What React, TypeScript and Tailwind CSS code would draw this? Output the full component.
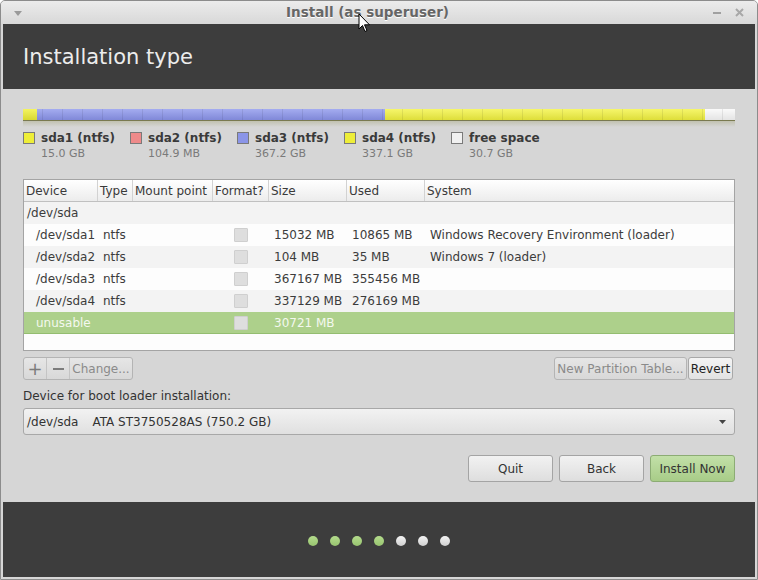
import React from "react";

const font = { fontFamily: '"DejaVu Sans", "Liberation Sans", sans-serif' };

const legend = [
  { name: "sda1 (ntfs)", size: "15.0 GB", color: "bg-[#eeee38]" },
  { name: "sda2 (ntfs)", size: "104.9 MB", color: "bg-[#ee8a8a]" },
  { name: "sda3 (ntfs)", size: "367.2 GB", color: "bg-[#8b95e8]" },
  { name: "sda4 (ntfs)", size: "337.1 GB", color: "bg-[#eeee38]" },
  { name: "free space", size: "30.7 GB", color: "bg-[#f0f0f0]" },
];

const rows = [
  { dev: "/dev/sda1", type: "ntfs", size: "15032 MB", used: "10865 MB", sys: "Windows Recovery Environment (loader)" },
  { dev: "/dev/sda2", type: "ntfs", size: "104 MB", used: "35 MB", sys: "Windows 7 (loader)" },
  { dev: "/dev/sda3", type: "ntfs", size: "367167 MB", used: "355456 MB", sys: "" },
  { dev: "/dev/sda4", type: "ntfs", size: "337129 MB", used: "276169 MB", sys: "" },
];

const cols = "grid grid-cols-[74px_35px_80px_56px_78px_78px_1fr]";

function Check() {
  return <div className="w-[14px] h-[14px] mx-auto bg-[#dedede] border border-[#cfcfcf] rounded-[1px]" />;
}

export default function App() {
  return (
    <div style={font} className="relative w-[758px] h-[580px] bg-[#d6d6d6] border border-[#8c8c8c] rounded-t-[5px] overflow-hidden flex flex-col text-[#3c3c3c]">
      {/* title bar */}
      <div className="h-[23px] shrink-0 flex items-center bg-gradient-to-b from-[#ececec] to-[#d8d8d8] px-3">
        <svg width="8" height="5" viewBox="0 0 8 5" className="ml-[1px] mt-[2px]">
          <path d="M0 0 L8 0 L4 5 Z" fill="#9a9a9a" />
        </svg>
        <div className="flex-1 text-center text-[13.5px] font-bold text-[#666] [text-shadow:0_1px_0_#fff]">
          Install (as superuser)
        </div>
        <div className="w-[8px] h-[2px] bg-[#a0a0a0] mr-[14px] mt-[1px]" />
        <svg width="9" height="9" viewBox="0 0 9 9" className="mr-[1px]">
          <path d="M1 1 L8 8 M8 1 L1 8" stroke="#a8a8a8" strokeWidth="2" />
        </svg>
      </div>

      <div className="flex-1 flex flex-col px-[2px]">
        {/* header */}
        <div className="h-[65px] shrink-0 bg-[#3d3d3d] flex items-center pl-[20px] pt-[2px]">
          <span className="text-[21px] text-[#ececec]">Installation type</span>
        </div>

        <div className="px-[20px] flex flex-col">
          {/* partition bar */}
          <div className="mt-[20px] h-[12px] flex border-b border-[#7a7a50] relative">
            <div className="w-[14px] bg-gradient-to-b from-[#f4f460] to-[#d8d830]" />
            <div className="w-[348px] bg-gradient-to-b from-[#a4acf0] to-[#8088d8]" />
            <div className="w-[320px] bg-gradient-to-b from-[#f6f66a] to-[#dede38]" />
            <div className="flex-1 bg-gradient-to-b from-[#fafafa] to-[#e4e4e4]" />
            <div className="absolute inset-0 bg-[repeating-linear-gradient(90deg,transparent_0px,transparent_19px,rgba(0,0,0,0.08)_19px,rgba(0,0,0,0.08)_20px)]" />
          </div>
          <div className="h-[6px] bg-gradient-to-b from-[#b8b8a0] to-[#d6d6d6] opacity-70" />

          {/* legend */}
          <div className="mt-[4px] flex">
            {legend.map((l) => (
              <div key={l.name} className="w-[107px] flex items-start">
                <div className={`w-[12px] h-[12px] mt-[1px] border border-[#7a7a7a] ${l.color}`} />
                <div className="ml-[6px] flex flex-col">
                  <span className="text-[12px] font-bold leading-[15px] text-[#3a3a3a]">{l.name}</span>
                  <span className="text-[11px] leading-[15px] text-[#7a7a7a]">{l.size}</span>
                </div>
              </div>
            ))}
          </div>

          {/* table */}
          <div className="mt-[18px] h-[172px] border border-[#a4a4a4] bg-[#fdfdfd] text-[12px] flex flex-col">
            <div className={`${cols} h-[22px] shrink-0 bg-gradient-to-b from-[#ffffff] to-[#ececec] border-b border-[#c0c0c0] text-[#3a3a3a]`}>
              {["Device", "Type", "Mount point", "Format?", "Size", "Used", "System"].map((h, i) => (
                <div key={h} className={`flex items-center pl-[2px] ${i < 6 ? "border-r border-[#d2d2d2]" : ""}`}>
                  {h}
                </div>
              ))}
            </div>
            <div className="h-[22px] bg-[#f3f3f3] flex items-center pl-[3px]">/dev/sda</div>
            {rows.map((r, i) => (
              <div key={r.dev} className={`${cols} h-[22px] items-center ${i % 2 === 0 ? "bg-[#fdfdfd]" : "bg-[#f3f3f3]"}`}>
                <div className="pl-[12px]">{r.dev}</div>
                <div className="pl-[5px]">{r.type}</div>
                <div />
                <Check />
                <div className="pl-[5px]">{r.size}</div>
                <div className="pl-[5px]">{r.used}</div>
                <div className="pl-[5px]">{r.sys}</div>
              </div>
            ))}
            <div className={`${cols} h-[22px] items-center bg-[#add08b] border-b border-[#94bd70] text-[#f4f8ef]`}>
              <div className="pl-[12px]">unusable</div>
              <div />
              <div />
              <Check />
              <div className="pl-[5px]">30721 MB</div>
              <div />
              <div />
            </div>
          </div>

          {/* edit buttons */}
          <div className="mt-[6px] h-[23px] flex text-[12px]">
            <div className="flex border border-[#b4b4b4] rounded-[3px] bg-gradient-to-b from-[#e6e6e6] to-[#d8d8d8] text-[#8a8a8a]">
              <div className="w-[23px] flex items-center justify-center text-[18px] text-[#7c7c7c] border-r border-[#c4c4c4]">+</div>
              <div className="w-[23px] flex items-center justify-center border-r border-[#c4c4c4]">
                <div className="w-[11px] h-[2px] bg-[#7c7c7c]" />
              </div>
              <div className="w-[62px] flex items-center justify-center">Change...</div>
            </div>
            <div className="flex-1" />
            <div className="w-[133px] flex items-center justify-center border border-[#b4b4b4] rounded-[3px] bg-gradient-to-b from-[#e6e6e6] to-[#d8d8d8] text-[#8a8a8a]">
              New Partition Table...
            </div>
            <div className="ml-[1px] w-[45px] flex items-center justify-center border border-[#a8a8a8] rounded-[3px] bg-gradient-to-b from-[#f4f4f4] to-[#e2e2e2] text-[#222]">
              Revert
            </div>
            <div className="w-[2px]" />
          </div>

          <div className="mt-[8px] text-[12px] leading-[16px] text-[#333]">Device for boot loader installation:</div>

          {/* combo */}
          <div className="mt-[4px] h-[27px] flex items-center border border-[#a8a8a8] rounded-[3px] bg-gradient-to-b from-[#f2f2f2] to-[#e0e0e0] text-[12px] text-[#333] pl-[3px] pr-[8px]">
            <span>/dev/sda</span>
            <span className="ml-[14px]">ATA ST3750528AS (750.2 GB)</span>
            <div className="flex-1" />
            <svg width="7" height="4" viewBox="0 0 7 4">
              <path d="M0 0 L7 0 L3.5 4 Z" fill="#444" />
            </svg>
          </div>

          {/* nav buttons */}
          <div className="mt-[20px] h-[27px] flex justify-end gap-[6px] text-[12px]">
            <div className="w-[85px] flex items-center justify-center border border-[#a4a4a4] rounded-[3px] bg-gradient-to-b from-[#f2f2f2] to-[#dedede] text-[#333]">Quit</div>
            <div className="w-[85px] flex items-center justify-center border border-[#a4a4a4] rounded-[3px] bg-gradient-to-b from-[#f2f2f2] to-[#dedede] text-[#333]">Back</div>
            <div className="w-[85px] flex items-center justify-center border border-[#8cac74] rounded-[3px] bg-gradient-to-b from-[#c2e0a8] to-[#a8cc88] text-[#333]">Install Now</div>
          </div>
        </div>

        {/* footer */}
        <div className="mt-[20px] h-[75px] shrink-0 bg-[#3d3d3d] flex items-center justify-center gap-[12px] pt-[2px]">
          {[0, 1, 2, 3, 4, 5, 6].map((i) => (
            <div
              key={i}
              className={`w-[10px] h-[10px] rounded-full ${i < 4 ? "bg-gradient-to-b from-[#b4dc8c] to-[#98c470]" : "bg-gradient-to-b from-[#f4f4f4] to-[#d0d0d0]"}`}
            />
          ))}
        </div>
      </div>

      {/* mouse cursor */}
      <svg width="13" height="20" viewBox="0 0 13 20" className="absolute left-[357px] top-[12px]">
        <path d="M1 1 L1 16 L4.5 12.5 L7 18.5 L9 17.5 L6.5 11.8 L11.5 11.8 Z" fill="#fff" stroke="#000" strokeWidth="1" strokeLinejoin="round" />
      </svg>
    </div>
  );
}
